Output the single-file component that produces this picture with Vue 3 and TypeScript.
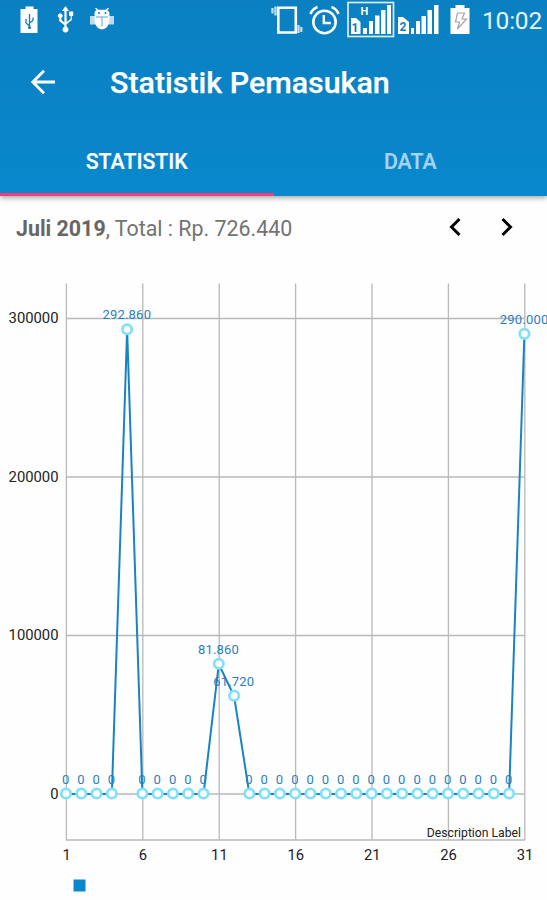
<script setup lang="ts">
import { ref } from 'vue'

interface Point {
  day: number
  value: number
  x: number
  y: number
}

const income: Record<number, number> = { 5: 292860, 11: 81860, 12: 61720, 31: 290000 }
const xOf = (day: number): number => 66 + (day - 1) * 15.28
const yOf = (value: number): number => 544 - value * 0.001585

const points: Point[] = Array.from({ length: 31 }, (_, i) => {
  const day = i + 1
  const value = income[day] ?? 0
  return { day, value, x: xOf(day), y: yOf(value) }
})
const linePoints = points.map((p) => `${p.x},${p.y}`).join(' ')
const xTicks = [1, 6, 11, 16, 21, 26, 31]
const yTicks = [0, 100000, 200000, 300000]
const format = (n: number): string => String(n).replace(/\B(?=(\d{3})+$)/g, '.')
const active = ref<'statistik' | 'data'>('statistik')
</script>

<template>
  <div class="screen">
    <header class="header">
      <div class="status">
        <svg class="status-icons" width="479" height="40" viewBox="0 0 479 40">
          <g fill="#fff">
            <path d="M25.500 6.500h8v2.500h4v24h-17V9h5z" />
            <g fill="none" stroke="#0a80c2" stroke-width="1.300">
              <path d="M29.500 14v14M29.500 26l-3.500-3v-4M29.500 23l3.500-2.500v-3" />
            </g>
            <circle cx="29.500" cy="27.500" r="1.600" fill="#0a80c2" />
            <path d="M65.500 6l3.500 5h-2.400v11l4-3v-3h-1.400v-4.500h4V16h-1.400v4l-5.200 4.200v2.500a3 3 0 1 1-2.200 0v-1.500L59.200 21v-3.200a2.300 2.300 0 1 1 2.200 0V20l3 2.500V11H62z" />
            <path d="M94.500 17.500v-4c0-2 1-3 2.300-3.600L95 8.500l1-.8 2.500 2h7l2.500-2 1 .8-1.800 1.900c1.500.6 2.300 1.600 2.300 3.600v4c0 6-2 11-7.500 11.500-5.500-.5-7.500-5.500-7.500-11.500z" />
            <rect x="90" y="16" width="24" height="8.500" opacity=".72" />
            <circle cx="99" cy="13" r="1" fill="#0a80c2" />
            <circle cx="105.500" cy="13" r="1" fill="#0a80c2" />
            <path d="M102 17.500v9M96 17h12" stroke="#0a80c2" stroke-width=".7" />
          </g>
          <g fill="none" stroke="#fff" stroke-width="2.600">
            <path d="M278.300 7.800h17.500v24.700h-17.500z" />
            <path d="M272.500 8v5.500M275.500 6.500v9M298.500 25v8M301.300 27v5" stroke-width="2.300" opacity=".75" />
            <circle cx="324.500" cy="22" r="11.200" stroke-width="2.600" />
            <path d="M323.800 15v8h7" stroke-width="2.400" />
            <path d="M310.500 14c1.500-4 4-6 7-7M338.500 14c-1.500-4-4-6-7-7" stroke-width="2.600" />
            <rect x="348" y="2.500" width="45.500" height="34" stroke-width="1.700" opacity=".85" />
          </g>
          <g fill="#fff">
            <path d="M351 18h5l4.500 4v12H351zM363 28h4v6h-4zM369 21h4v13h-4zM375 15.500h4.500v18.500H375zM381 10h4.500v24H381zM387 5h4v29h-4z" />
            <path d="M398 17h5l6 5v12h-11zM411 28h3v6h-3zM416 21h4v13h-4zM421.500 16h4.500v18h-4.500zM427.500 10h4.500v24h-4.500zM434 5h4.500v29H434z" />
            <path d="M455.500 5h9v3h5v26h-19V8h5z" />
          </g>
          <text x="355" y="31.500" class="sim">1</text>
          <text x="403" y="31" class="sim">2</text>
          <text x="364.500" y="14.500" class="network">H</text>
          <path d="M457.500 13h7l-2.500 6h4.500l-9 10 2-7h-4z" fill="#fff" stroke="#a5a5a5" stroke-width="1.200" />
        </svg>
        <span class="clock">10:02</span>
      </div>
      <div class="toolbar">
        <svg class="back" width="28" height="28" viewBox="0 0 28 28" fill="none" stroke="#fff" stroke-width="2.800">
          <path d="M26 14H4M15 2.800L3.800 14 15 25.200" />
        </svg>
        <h1>Statistik Pemasukan</h1>
      </div>
      <nav class="tabs">
        <button :class="{ active: active === 'statistik' }" @click="active = 'statistik'"><span>STATISTIK</span></button>
        <button :class="{ active: active === 'data' }" @click="active = 'data'"><span>DATA</span></button>
      </nav>
    </header>
    <section class="summary">
      <p><b>Juli 2019</b>, Total : Rp. 726.440</p>
      <div class="arrows">
        <svg width="12" height="20" viewBox="0 0 12 20"><path d="M10.500 2L2.500 10l8 8" /></svg>
        <svg width="12" height="20" viewBox="0 0 12 20"><path d="M1.500 2l8 8-8 8" /></svg>
      </div>
    </section>
    <svg class="chart" width="547" height="650" viewBox="0 0 547 650">
      <g class="grid">
        <line v-for="d in xTicks" :key="d" :x1="xOf(d) + 0.400" :x2="xOf(d) + 0.400" y1="33.500" y2="590" />
        <line v-for="v in yTicks" :key="v" x1="66" x2="525" :y1="yOf(v)" :y2="yOf(v)" />
        <line x1="66" x2="525" y1="590" y2="590" />
      </g>
      <text v-for="v in yTicks" :key="v" class="axis" text-anchor="end" x="58.500" :y="yOf(v) + 4.500">{{ v }}</text>
      <text v-for="d in xTicks" :key="d" class="axis" text-anchor="middle" :x="xOf(d) + 0.600" y="610">{{ d }}</text>
      <text class="description" x="521" y="586.500" text-anchor="end">Description Label</text>
      <polyline class="line" :points="linePoints" />
      <text v-for="p in points" :key="p.day" class="value" text-anchor="middle" :x="p.x - 0.300" :y="p.y - 10.500">{{ format(p.value) }}</text>
      <circle v-for="p in points" :key="p.day" class="dot" :cx="p.x" :cy="p.y - 0.500" r="4.700" />
      <rect x="73.500" y="629.500" width="12" height="12" fill="#0b87cc" />
    </svg>
  </div>
</template>

<style>
body {
  background: #fefefe;
  overflow: hidden;
}
</style>

<style scoped>
.screen {
  width: 547px;
  height: 900px;
  overflow: hidden;
  font-family: Roboto, sans-serif;
  background: #fefefe;
}
.header {
  height: 196px;
  background: linear-gradient(#0a80c1, #0988cd);
  box-shadow: 0 2px 5px rgba(0, 0, 0, 0.350);
  color: #fff;
}
.status {
  height: 40px;
  display: flex;
  align-items: center;
}
.status-icons {
  flex: none;
}
.clock {
  padding: 2px 0 0 3px;
  font-size: 24.500px;
  line-height: 38px;
  letter-spacing: -0.200px;
  color: #e8f4fb;
}
.toolbar {
  height: 84px;
  display: flex;
  align-items: center;
  padding-left: 29px;
  gap: 53px;
}
.sim {
  font-size: 12px;
  font-weight: 700;
  fill: #0a80c2;
  text-anchor: middle;
}
.network {
  font-size: 11px;
  font-weight: 700;
  fill: #fff;
  text-anchor: middle;
}
.back {
  flex: none;
  margin-top: -1px;
}
h1 {
  margin: 1px 0 0;
  font-size: 30.400px;
  line-height: 36px;
  font-weight: 500;
  -webkit-text-stroke: 0.250px #fff;
}
.tabs {
  display: flex;
  height: 72px;
}
.tabs button {
  flex: 1;
  padding: 6px 0 0;
  border: 0;
  border-bottom: 3px solid transparent;
  background: none;
  font: 500 21.300px/26px Roboto, sans-serif;
  -webkit-text-stroke: 0.200px currentColor;
  color: #a4d4f1;
}
.tabs button.active {
  color: #fff;
  border-bottom-color: #ee3e80;
}
.summary {
  height: 54px;
  display: flex;
  align-items: center;
  justify-content: space-between;
  padding: 8px 34px 0 16px;
  box-sizing: border-box;
}
.summary p {
  margin: 3px 0 0;
  font-size: 21.400px;
  line-height: 28px;
  color: #737373;
}
.summary b {
  font-weight: 700;
  color: #666;
}
.arrows {
  display: flex;
  gap: 40px;
}
.arrows path {
  fill: none;
  stroke: #000;
  stroke-width: 3;
}
.chart {
  display: block;
}
.grid line {
  stroke: #b9b9b9;
  stroke-width: 1.300;
}
.axis {
  font-size: 14.800px;
  fill: #222;
}
.description {
  font-size: 12.200px;
  fill: #222;
}
.line {
  fill: none;
  stroke: #1a83c3;
  stroke-width: 2;
}
.value {
  font-size: 13px;
  letter-spacing: 0.200px;
  fill: #2c7fbd;
}
.dot {
  fill: #fff;
  stroke: #80e0fa;
  stroke-width: 2.700;
}
</style>
